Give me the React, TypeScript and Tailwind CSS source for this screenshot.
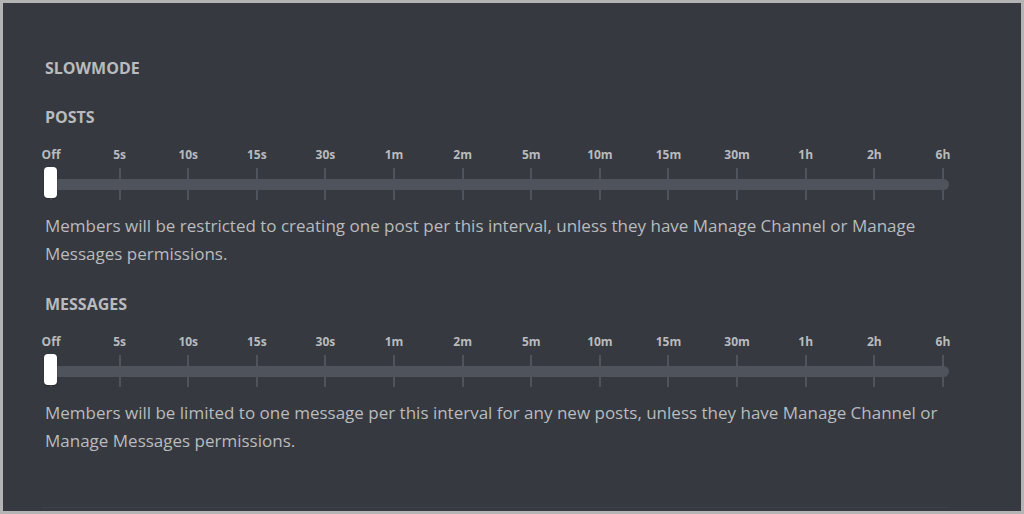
const ticks = ["Off", "5s", "10s", "15s", "30s", "1m", "2m", "5m", "10m", "15m", "30m", "1h", "2h", "6h"]

const SlowSlider = () => {
    return (
        <div className="w-[904px]">
            <div className="flex justify-between px-[5px] h-[16px] text-[12px] leading-[16px] font-bold text-[#b9bbbe]">
                {ticks.map((t) => (
                    <div key={t} className="w-[2px] flex justify-center">
                        <span className="whitespace-nowrap">{t}</span>
                    </div>
                ))}
            </div>
            <div className="relative h-[32px] mt-[5px]">
                <div className="absolute left-0 right-0 top-[11px] h-[11px] rounded-full bg-[#4f545c]" />
                <div className="relative flex justify-between px-[5px] h-full">
                    {ticks.map((t) => (
                        <div key={t} className="w-[2px] h-full bg-[#4f545c]" />
                    ))}
                </div>
                <div className="absolute left-[-1px] top-[-1px] w-[13px] h-[31px] rounded-[4px] bg-white shadow-[0_1px_2px_rgba(0,0,0,0.3)]" />
            </div>
        </div>
    )
}

const Section = ({ title, text }: { title: string; text: string }) => {
    return (
        <div className="flex flex-col">
            <h3 className="text-[16px] leading-[20px] font-bold uppercase text-[#b9bbbe]">{title}</h3>
            <div className="mt-[20px]">
                <SlowSlider />
            </div>
            <p className="mt-[12px] text-[17px] leading-[28px] text-[#b9bbbe] w-[900px]">{text}</p>
        </div>
    )
}

export default function App() {
    return (
        <div
            className="w-[1024px] h-[514px] border-[3px] border-[#b4b4b4] bg-[#36393f] flex flex-col"
            style={{ fontFamily: '"Open Sans", "Noto Sans", sans-serif' }}
        >
            <div className="pl-[42px] pt-[55px] flex flex-col">
                <h2 className="text-[16px] leading-[20px] font-bold uppercase text-[#b9bbbe]">Slowmode</h2>
                <div className="mt-[29px] flex flex-col gap-[26px]">
                    <Section
                        title="Posts"
                        text="Members will be restricted to creating one post per this interval, unless they have Manage Channel or Manage Messages permissions."
                    />
                    <Section
                        title="Messages"
                        text="Members will be limited to one message per this interval for any new posts, unless they have Manage Channel or Manage Messages permissions."
                    />
                </div>
            </div>
            <div className="mt-auto mb-[3px] ml-[39px] w-[907px] h-px bg-[#3e4147]" />
        </div>
    )
}
